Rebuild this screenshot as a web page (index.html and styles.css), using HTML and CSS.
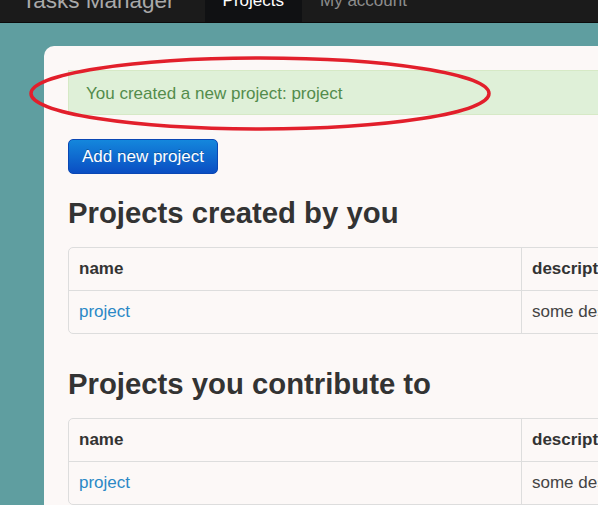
FILE: index.html
```html
<!DOCTYPE html>
<html lang="en">
<head>
<meta charset="utf-8">
<title>Tasks Manager</title>
<link rel="stylesheet" href="styles.css">
</head>
<body>
<header class="navbar">
  <div class="nav-inner">
    <a class="brand" href="#">Tasks Manager</a>
    <ul class="nav">
      <li><a class="nav-link active" href="#">Projects</a></li>
      <li><a class="nav-link" href="#">My account</a></li>
    </ul>
  </div>
</header>
<main class="page">
  <section class="card">
    <div class="alert">You created a new project: project</div>
    <button class="btn" type="button">Add new project</button>
    <h2 class="heading">Projects created by you</h2>
    <table class="table">
      <thead><tr><th class="col-name">name</th><th>description</th></tr></thead>
      <tbody><tr><td><a class="link" href="#">project</a></td><td>some description</td></tr></tbody>
    </table>
    <h2 class="heading">Projects you contribute to</h2>
    <table class="table">
      <thead><tr><th class="col-name">name</th><th>description</th></tr></thead>
      <tbody><tr><td><a class="link" href="#">project</a></td><td>some description</td></tr></tbody>
    </table>
  </section>
</main>
<svg class="annotation" width="598" height="200" viewBox="0 0 598 200" aria-hidden="true">
  <ellipse cx="260" cy="93.5" rx="229" ry="35.5" fill="none" stroke="#e21f2b" stroke-width="3.5"/>
</svg>
</body>
</html>
```
FILE: styles.css
```css
html, body {
  margin: 0;
  padding: 0;
  overflow: hidden;
}
body {
  background: #5f9ea0;
  font-family: "Liberation Sans", Arial, sans-serif;
  color: #333;
  width: 598px;
  height: 505px;
  position: relative;
}
.navbar {
  height: 22px;
  background: #1b1b1b;
  border-bottom: 1px solid #0b0b0b;
  overflow: hidden;
}
.nav-inner {
  display: flex;
  align-items: flex-end;
  height: 22px;
}
.brand {
  font-size: 22.5px;
  line-height: 22.5px;
  color: #a9a9a9;
  text-decoration: none;
  margin-left: 22px;
  margin-right: 30px;
  padding-bottom: 10px;
  white-space: nowrap;
}
.nav {
  display: flex;
  list-style: none;
  margin: 0;
  padding: 0;
  height: 22px;
}
.nav-link {
  display: flex;
  align-items: flex-end;
  height: 22px;
  box-sizing: border-box;
  padding: 0 18px 13px;
  font-size: 17px;
  line-height: 17px;
  color: #8d8d8d;
  text-decoration: none;
  white-space: nowrap;
}
.nav-link.active {
  background: #101113;
  color: #fff;
}
.page {
  padding-top: 23px;
}
.card {
  margin-left: 44px;
  width: 800px;
  height: 600px;
  background: #fcf8f7;
  border-radius: 10px;
  padding: 24px 0 0 24px;
  box-sizing: border-box;
}
.alert {
  width: 760px;
  box-sizing: border-box;
  background: #dff0d8;
  border: 1px solid #d6e9c6;
  color: #538c4c;
  font-size: 17px;
  line-height: 21px;
  padding: 12px 17px 10px;
}
.btn {
  display: block;
  margin-top: 24px;
  height: 35px;
  box-sizing: border-box;
  padding: 6px 13px;
  font-family: inherit;
  font-size: 17px;
  line-height: 21px;
  color: #fff;
  background: linear-gradient(to bottom, #1487dc, #0a4ec3);
  border: 1px solid #0a47b4;
  border-radius: 5px;
  text-shadow: 0 -1px 0 rgba(0, 0, 0, 0.25);
}
.heading {
  margin: 21px 0 0;
  font-size: 29.3px;
  line-height: 35px;
  font-weight: bold;
  color: #333;
}
.table {
  margin: 17px 0 32px;
  width: 720px;
  table-layout: fixed;
  border-collapse: separate;
  border-spacing: 0;
  border: 1px solid #ddd;
  border-radius: 5px;
}
.table th,
.table td {
  padding: 10px 10px 11px;
  font-size: 17px;
  line-height: 21px;
  text-align: left;
  white-space: nowrap;
  overflow: hidden;
}
.table th {
  font-weight: bold;
  color: #333;
}
.table td {
  color: #444;
  border-top: 1px solid #ddd;
}
.table th + th,
.table td + td {
  border-left: 1px solid #ddd;
}
.col-name {
  width: 452px;
  box-sizing: border-box;
}
.link {
  color: #2a88c6;
  text-decoration: none;
}
.annotation {
  position: absolute;
  left: 0;
  top: 0;
  pointer-events: none;
}
```
